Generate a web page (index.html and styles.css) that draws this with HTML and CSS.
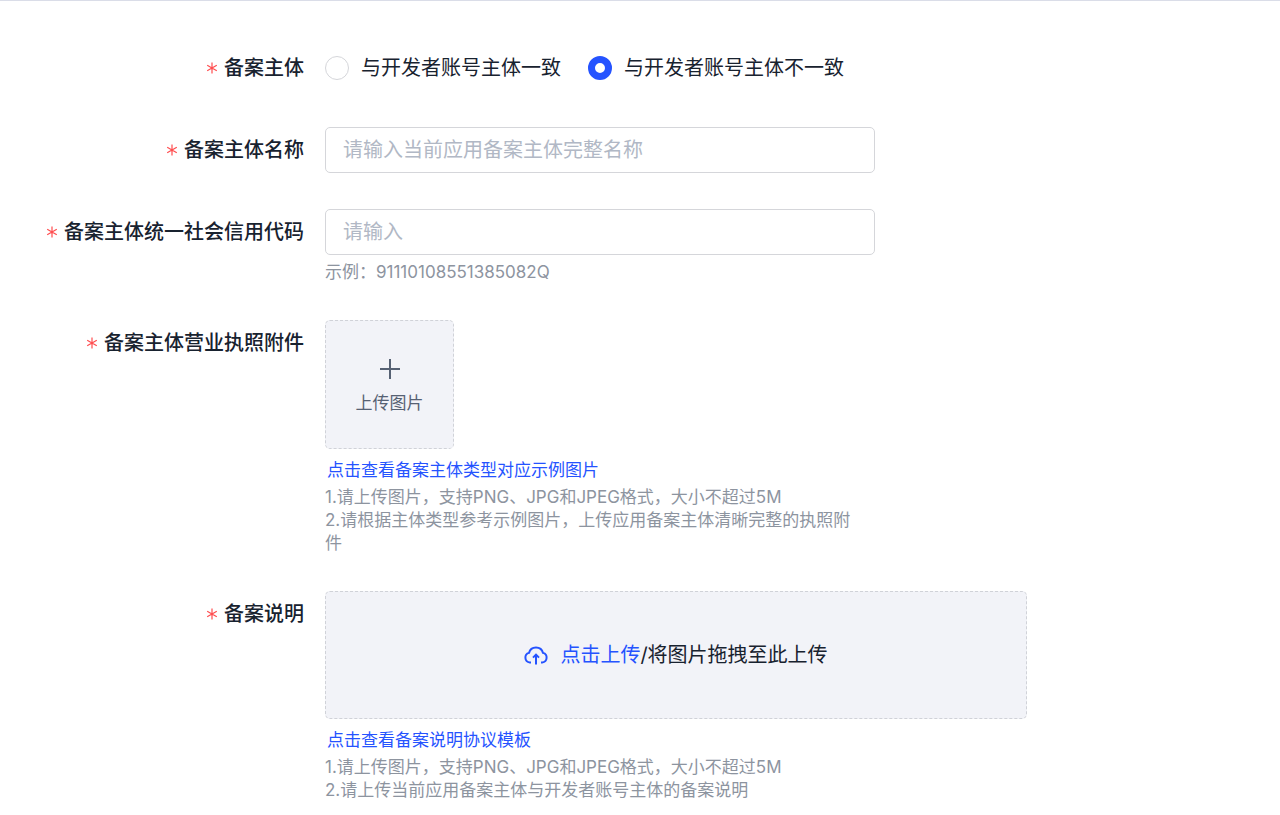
FILE: index.html
```html
<!DOCTYPE html>
<html lang="zh-CN">
<head>
<meta charset="utf-8">
<meta name="viewport" content="width=device-width, initial-scale=1">
<title>备案主体</title>
<link rel="stylesheet" href="styles.css">
</head>
<body>
<svg class="sprite" aria-hidden="true">
  <symbol id="required" viewBox="0 0 12 12"><path d="M6 .5v11M1.2 3.2l9.6 5.6M10.8 3.2L1.2 8.8" fill="none" stroke="currentColor" stroke-width="1.2"/></symbol>
</svg>
<form class="form">
  <div class="item" role="radiogroup" aria-labelledby="subject-label">
    <span class="label" id="subject-label"><svg class="required"><use href="#required"/></svg>备案主体</span>
    <div class="control radios">
      <label class="radio"><input type="radio" name="subject">与开发者账号主体一致</label>
      <label class="radio"><input type="radio" name="subject" checked>与开发者账号主体不一致</label>
    </div>
  </div>
  <div class="item">
    <label class="label" for="name"><svg class="required"><use href="#required"/></svg>备案主体名称</label>
    <div class="control"><input class="text" id="name" type="text" placeholder="请输入当前应用备案主体完整名称"></div>
  </div>
  <div class="item">
    <label class="label" for="code"><svg class="required"><use href="#required"/></svg>备案主体统一社会信用代码</label>
    <div class="control">
      <input class="text" id="code" type="text" placeholder="请输入">
      <p class="help">示例：91110108551385082Q</p>
    </div>
  </div>
  <div class="item">
    <label class="label" for="license"><svg class="required"><use href="#required"/></svg>备案主体营业执照附件</label>
    <div class="control">
      <button class="picture" id="license" type="button">
        <svg class="plus" viewBox="0 0 20 20"><path d="M10 0v20M0 10h20" fill="none" stroke="currentColor" stroke-width="2"/></svg>
        上传图片
      </button>
      <a class="link" href="#">点击查看备案主体类型对应示例图片</a>
      <p class="help">1.请上传图片，支持PNG、JPG和JPEG格式，大小不超过5M<br>2.请根据主体类型参考示例图片，上传应用备案主体清晰完整的执照附件</p>
    </div>
  </div>
  <div class="item">
    <label class="label" for="statement"><svg class="required"><use href="#required"/></svg>备案说明</label>
    <div class="control wide">
      <button class="drop" id="statement" type="button">
        <svg class="cloud" viewBox="0 0 24 20"><path d="M7 17.5H5.8A4.9 4.9 0 0 1 5 7.9 7.2 7.2 0 0 1 19 7.9 4.9 4.9 0 0 1 18.2 17.5H17M12 19.5V10M9 12.6L12 9.6l3 3" fill="none" stroke="currentColor" stroke-width="2"/></svg>
        <span><span class="accent">点击上传</span>/将图片拖拽至此上传</span>
      </button>
      <a class="link" href="#">点击查看备案说明协议模板</a>
      <p class="help">1.请上传图片，支持PNG、JPG和JPEG格式，大小不超过5M<br>2.请上传当前应用备案主体与开发者账号主体的备案说明</p>
    </div>
  </div>
</form>
</body>
</html>
```
FILE: styles.css
```css
* { box-sizing: border-box; }
body {
  margin: 0;
  border-top: 1px solid #dadde8;
  background: #fff;
  color: #18222f;
  font: 20px/30px Inter, "Noto Sans CJK SC", sans-serif;
}
button, input { font: inherit; color: inherit; }
.sprite { position: absolute; width: 0; height: 0; }
.form { padding: 44px 24px 0 0; }
.item {
  display: grid;
  grid-template-columns: 304px minmax(0, 1fr);
  column-gap: 21px;
  margin-bottom: 36px;
}
.label {
  display: flex;
  align-items: center;
  justify-content: flex-end;
  gap: 6px;
  height: 46px;
  font-weight: 500;
}
.required { width: 12px; height: 12px; color: #ff4d4f; }
.control { max-width: 550px; }
.wide { max-width: 702px; }
.radios { display: flex; flex-wrap: wrap; gap: 27px; max-width: none; }
.radio { display: flex; align-items: center; gap: 12px; height: 46px; }
.radio input {
  appearance: none;
  width: 24px;
  height: 24px;
  margin: 0;
  border: 1px solid #d5d6da;
  border-radius: 50%;
  background: #fff;
}
.radio input:checked { border: 7px solid #2553ff; }
.text {
  display: block;
  width: 100%;
  height: 46px;
  padding: 0 17px;
  border: 1px solid #d5d6da;
  border-radius: 5px;
  background: #fff;
}
.text::placeholder { color: #b1b8c5; opacity: 1; }
.help {
  margin: 4px 0 0;
  padding-right: 20px;
  color: #8d949f;
  font-size: 17px;
  line-height: 23px;
}
.text + .help { margin-top: 5px; line-height: 24px; }
.picture, .drop {
  display: flex;
  align-items: center;
  justify-content: center;
  border: 1px dashed #d0d2d8;
  border-radius: 5px;
  background: #f2f3f8;
}
.picture {
  flex-direction: column;
  gap: 12px;
  width: 129px;
  height: 129px;
  padding: 4px 0 0;
  color: #566173;
  font-size: 17px;
  line-height: 24px;
}
.plus { width: 20px; height: 20px; }
.drop { gap: 12px; width: 100%; height: 128px; }
.cloud { width: 24px; height: 20px; color: #2553ff; }
.accent { color: #2553ff; }
.link {
  display: block;
  width: fit-content;
  margin-top: 9px;
  padding-left: 2px;
  color: #2553ff;
  font-size: 17px;
  line-height: 24px;
  text-decoration: none;
}
```
